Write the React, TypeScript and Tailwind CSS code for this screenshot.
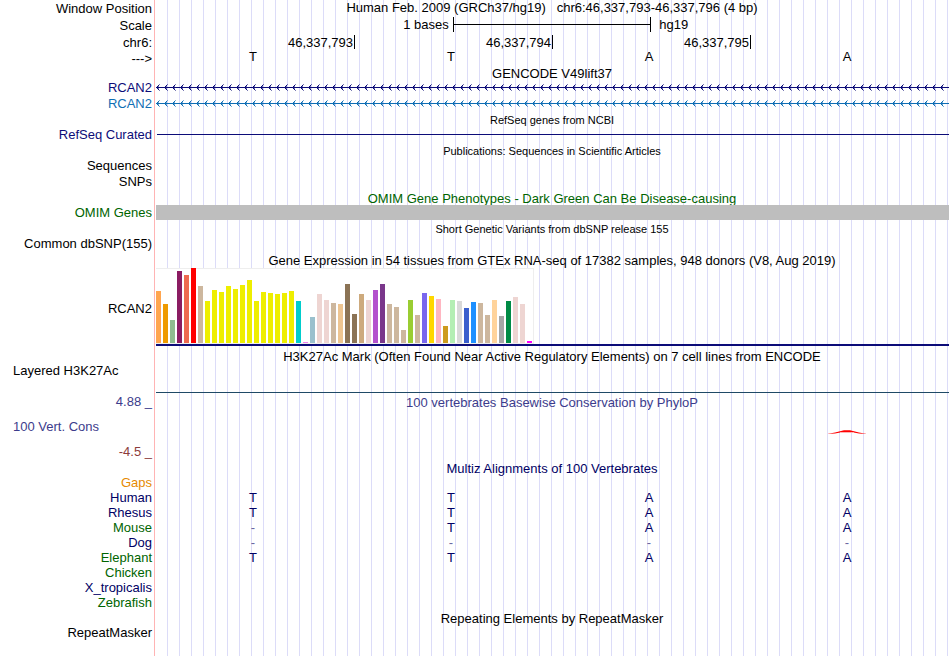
import type { ReactNode } from "react";

type RowProps = {
  label?: ReactNode;
  labelClass?: string;
  className?: string;
  children?: ReactNode;
};

/** One line of the browser image: a label on the left, the track on the right. */
function Row({ label, labelClass = "text-right text-black", className = "h-4", children }: RowProps) {
  return (
    <div className={`flex ${className}`}>
      <div className={`w-[154px] shrink-0 pr-0.5 ${labelClass}`}>{label}</div>
      <div className="min-w-0 flex-1 border-l border-[#ffb4b4] bg-[linear-gradient(white,white),linear-gradient(to_right,#dcdcf8_1px,transparent_1px)] bg-size-[1px_100%,12px_100%] [background-repeat:no-repeat,repeat]">
        {children}
      </div>
    </div>
  );
}

function Title({ children, className = "pt-px text-black", rowClass = "h-[15px]" }: { children: ReactNode; className?: string; rowClass?: string }) {
  return (
    <Row className={rowClass}>
      <h2 className={`text-center whitespace-pre ${className}`}>{children}</h2>
    </Row>
  );
}

function Bases({ bases, className }: { bases: string[]; className: string }) {
  return (
    <div className={`grid grid-cols-4 pr-0.5 text-center ${className}`}>
      {bases.map((base, i) => (
        <span key={i} className={base === "-" ? "pr-0.5 opacity-60" : "pr-0.5"}>
          {base}
        </span>
      ))}
    </div>
  );
}

/** Intron line with strand arrows pointing left. */
function Intron({ id, className }: { id: string; className: string }) {
  return (
    <svg className={`block h-[15px] w-full ${className}`} shapeRendering="crispEdges" aria-hidden="true">
      <defs>
        <pattern id={id} x="1" y="0" width="8" height="15" patternUnits="userSpaceOnUse">
          <path d="M1 6h1v3h-1z M2 5h1v1h-1z M2 9h1v1h-1z" fill="currentColor" />
          <path d="M2 6h1v1h-1z M2 8h1v1h-1z M3 4h1v1h-1z M3 10h1v1h-1z" fill="currentColor" opacity="0.55" />
        </pattern>
      </defs>
      <rect x="1" y="7" width="100%" height="1" fill="currentColor" />
      <rect x="1" y="0" width="100%" height="15" fill={`url(#${id})`} />
    </svg>
  );
}

const tissues: [string, number][] = [
  ["#ffa54f", 52], ["#ee9a00", 39], ["#8fbc8f", 23], ["#8b1c62", 72], ["#ee6a50", 68], ["#ff0000", 75],
  ["#cdb79e", 57], ["#eeee00", 42], ["#eeee00", 53], ["#eeee00", 51], ["#eeee00", 57], ["#eeee00", 54],
  ["#eeee00", 58], ["#eeee00", 63], ["#eeee00", 42], ["#eeee00", 51], ["#eeee00", 50], ["#eeee00", 49],
  ["#eeee00", 50], ["#eeee00", 52], ["#00cdcd", 42], ["#ee82ee", 1], ["#9ac0cd", 26], ["#eed5d2", 49],
  ["#eed5d2", 43], ["#cdb79e", 40], ["#eec591", 39], ["#8b7355", 59], ["#8b7355", 29], ["#cdaa7d", 49],
  ["#eed5d2", 43], ["#b452cd", 53], ["#7a378b", 59], ["#cdb79e", 39], ["#cdb79e", 36], ["#cdb79e", 13],
  ["#9acd32", 43], ["#cdb79e", 28], ["#7a67ee", 50], ["#ffd700", 47], ["#ffb6c1", 44], ["#cd9b1d", 17],
  ["#b4eeb4", 43], ["#d9d9d9", 42], ["#3a5fcd", 35], ["#1e90ff", 41], ["#cdb79e", 40], ["#cdb79e", 28],
  ["#ffd39b", 43], ["#a6a6a6", 27], ["#008b45", 42], ["#eed5d2", 46], ["#eed5d2", 39], ["#ff00ff", 2],
];

const navy = "text-[#0c0c78]";
const green = "text-[#006400]";
const deepBlue = "text-[#000064]";

const species: { name: string; color: string; bases: string[] }[] = [
  { name: "Gaps", color: "text-[#e68a00]", bases: [] },
  { name: "Human", color: deepBlue, bases: ["T", "T", "A", "A"] },
  { name: "Rhesus", color: deepBlue, bases: ["T", "T", "A", "A"] },
  { name: "Mouse", color: green, bases: ["-", "T", "A", "A"] },
  { name: "Dog", color: deepBlue, bases: ["-", "-", "-", "-"] },
  { name: "Elephant", color: green, bases: ["T", "T", "A", "A"] },
  { name: "Chicken", color: green, bases: [] },
  { name: "X_tropicalis", color: deepBlue, bases: [] },
  { name: "Zebrafish", color: green, bases: [] },
];

export default function App() {
  return (
    <main className="w-full overflow-hidden bg-white pr-px font-['Liberation_Sans',Arial,sans-serif] text-[13px] leading-[15px] whitespace-nowrap">
      <Row label="Window Position" className="h-[17px]" labelClass="pt-px text-right">
        <h1 className="text-center whitespace-pre">
          {"Human Feb. 2009 (GRCh37/hg19)   chr6:46,337,793-46,337,796 (4 bp)"}
        </h1>
      </Row>
      <Row label="Scale" className="h-[17px]" labelClass="pt-px text-right">
        <div className="flex h-[15px]">
          <span className="w-3/8 pr-1 text-right">1 bases</span>
          <span className="flex w-1/4 items-center border-x border-black">
            <span className="h-px w-full bg-black" />
          </span>
          <span className="w-3/8 pl-2">hg19</span>
        </div>
      </Row>
      <Row label="chr6:" className="h-[15px]" labelClass="pt-px text-right">
        <div className="grid grid-cols-4 pt-px pl-0.5 text-right">
          {["46,337,793", "46,337,794", "46,337,795"].map((position) => (
            <span key={position} className="h-[14px] border-r border-black pr-px">
              {position}
            </span>
          ))}
        </div>
      </Row>
      <Row label="--->" className="h-[17px]" labelClass="pt-0.5 text-right">
        <Bases bases={["T", "T", "A", "A"]} className="text-black" />
      </Row>

      <Title rowClass="h-[14px]" className="text-black">GENCODE V49lift37</Title>
      <Row label="RCAN2" labelClass={`text-right ${navy}`}>
        <Intron id="intron-navy" className={navy} />
      </Row>
      <Row label="RCAN2" labelClass="text-right text-[#0f6eb4]">
        <Intron id="intron-blue" className="text-[#0f6eb4]" />
      </Row>

      <Title className="pt-px text-[11px]">RefSeq genes from NCBI</Title>
      <Row label="RefSeq Curated" labelClass={`text-right ${navy}`}>
        <div className="ml-0.5 pt-[7px]">
          <div className="h-px bg-[#0c0c78]" />
        </div>
      </Row>

      <Title className="pt-px text-[11px]">Publications: Sequences in Scientific Articles</Title>
      <Row label="Sequences" />
      <Row label="SNPs" />

      <Title className={`pt-px ${green}`}>OMIM Gene Phenotypes - Dark Green Can Be Disease-causing</Title>
      <Row label="OMIM Genes" labelClass={`text-right ${green}`}>
        <div className="relative ml-px h-[15px] bg-[#bebebe]" />
      </Row>

      <Title className="pt-px text-[11px]">Short Genetic Variants from dbSNP release 155</Title>
      <Row label="Common dbSNP(155)" className="h-[17px]" />

      <Title className="text-black">
        Gene Expression in 54 tissues from GTEx RNA-seq of 17382 samples, 948 donors (V8, Aug 2019)
      </Title>
      <Row label="RCAN2" className="h-[78px]" labelClass="flex items-center justify-end pt-0.5">
        <div className="ml-px flex h-full flex-col justify-between border-b-2 border-[#0c0c78]">
          <div className="flex h-[76px] w-[378px] items-end gap-0.5 border-t border-r border-b border-[#eeeeee] bg-white">
            {tissues.map(([color, height], i) => (
              <span key={i} className="w-[5px] shrink-0" style={{ height, backgroundColor: color }} />
            ))}
          </div>
        </div>
      </Row>

      <Title rowClass="h-[17px]" className="pt-[3px]">
        H3K27Ac Mark (Often Found Near Active Regulatory Elements) on 7 cell lines from ENCODE
      </Title>
      <Row label="Layered H3K27Ac" className="h-[31px]" labelClass="pl-[13px]">
        <div className="ml-px h-[30px] border-b border-[#1f4a66]" />
      </Row>

      <Row label="4.88 _" className="h-[15px]" labelClass="text-right text-[#3c3c8c]">
        <h2 className="pt-px text-center text-[#3c3c8c]">100 vertebrates Basewise Conservation by PhyloP</h2>
      </Row>
      <Row
        className="h-[51px]"
        labelClass="flex flex-col gap-2.5 pt-2.5 pl-[13px]"
        label={
          <>
            <span className="text-[#3c3c8c]">100 Vert. Cons</span>
            <span className="text-right text-[#8c3c3c]">-4.5 _</span>
          </>
        }
      >
        <div className="grid grid-cols-4 pt-[21px] pr-0.5">
          <svg viewBox="0 0 42 4" className="col-start-4 block h-1 w-[42px] justify-self-center" aria-hidden="true">
            <path d="M0 4 L8 2.4 L17 0.3 L23 0.3 L32 2.4 L40 4 L32 3.4 L24 2 H16 L8 3.4 Z" fill="#ff0000" />
            <path d="M13 2.5 H27" stroke="#ffb4b4" strokeWidth="1" />
          </svg>
        </div>
      </Row>

      <Title className={`pt-px ${deepBlue}`}>Multiz Alignments of 100 Vertebrates</Title>
      {species.map(({ name, color, bases }) => (
        <Row key={name} label={name} className="h-[15px]" labelClass={`text-right ${color}`}>
          <Bases bases={bases} className={deepBlue} />
        </Row>
      ))}

      <Title>Repeating Elements by RepeatMasker</Title>
      <Row label="RepeatMasker" className="h-[31px]" />
    </main>
  );
}
